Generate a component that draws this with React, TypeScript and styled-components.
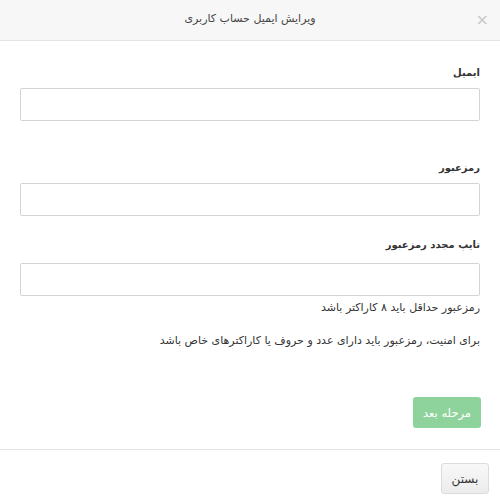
import styled, { createGlobalStyle } from 'styled-components'

const GlobalStyle = createGlobalStyle`
    html, body {
        margin: 0;
        padding: 0;
        background: #ffffff;
    }
    body {
        font-family: 'DejaVu Sans', 'Noto Sans', sans-serif;
        color: #333333;
    }
`

const Dialog = styled.div`
    width: 500px;
    height: 500px;
    direction: rtl;
    display: flex;
    flex-direction: column;
    background: #ffffff;
`

const Header = styled.div`
    position: relative;
    height: 40px;
    flex-shrink: 0;
    background: #f7f7f7;
    border-bottom: 1px solid #e3e3e3;
    display: flex;
    align-items: center;
    justify-content: center;
`

const Title = styled.h4`
    margin: 0 0 3px 0;
    font-size: 11px;
    font-weight: normal;
    color: #444444;
`

const CloseButton = styled.span`
    position: absolute;
    right: 11px;
    top: 10px;
    font-size: 16px;
    line-height: 20px;
    color: #c8c8c8;
    cursor: pointer;
`

const Body = styled.div`
    flex: 1;
    padding: 22px 20px 21px 20px;
    display: flex;
    flex-direction: column;
`

const Group = styled.div<{ $top: number }>`
    display: flex;
    flex-direction: column;
    margin-top: ${(p) => p.$top}px;
`

const Label = styled.label<{ $gap: number }>`
    font-size: 10px;
    font-weight: bold;
    line-height: 20px;
    color: #333333;
    margin-bottom: ${(p) => p.$gap}px;
`

const Input = styled.input`
    box-sizing: border-box;
    width: 100%;
    height: 33px;
    border: 1px solid #d4d4d4;
    border-radius: 2px;
    padding: 4px 10px;
    font-family: inherit;
    font-size: 13px;
    direction: rtl;
    &:focus {
        outline: 0;
    }
`

const Hint = styled.p<{ $top: number }>`
    margin: ${(p) => p.$top}px 0 0 0;
    font-size: 11px;
    line-height: 18px;
    color: #333333;
`

const Actions = styled.div`
    margin-top: auto;
    display: flex;
    justify-content: flex-start;
`

const NextButton = styled.button`
    width: 68px;
    height: 31px;
    margin-right: -1px;
    border: none;
    border-radius: 3px;
    background: #8fd39c;
    color: #ffffff;
    font-family: inherit;
    font-size: 11.5px;
    cursor: pointer;
`

const Footer = styled.div`
    height: 51px;
    flex-shrink: 0;
    box-sizing: border-box;
    border-top: 1px solid #e3e3e3;
    padding: 13px 11px 0 11px;
    display: flex;
    justify-content: flex-start;
`

const CloseAction = styled.button`
    width: 48px;
    height: 31px;
    border: 1px solid #dcdcdc;
    border-radius: 3px;
    background: linear-gradient(#f8f8f8, #ececec);
    color: #333333;
    font-family: inherit;
    font-size: 12px;
    cursor: pointer;
`

const App = () => {
    return (
        <>
            <GlobalStyle />
            <Dialog>
                <Header>
                    <Title>ویرایش ایمیل حساب کاربری</Title>
                    <CloseButton>×</CloseButton>
                </Header>
                <Body>
                    <Group $top={0}>
                        <Label $gap={5}>ایمیل</Label>
                        <Input type='email' />
                    </Group>
                    <Group $top={37}>
                        <Label $gap={5}>رمزعبور</Label>
                        <Input type='password' />
                    </Group>
                    <Group $top={19}>
                        <Label $gap={8}>تایپ مجدد رمزعبور</Label>
                        <Input type='password' />
                    </Group>
                    <Hint $top={3}>رمزعبور حداقل باید ۸ کاراکتر باشد</Hint>
                    <Hint $top={15}>برای امنیت، رمزعبور باید دارای عدد و حروف یا کاراکترهای خاص باشد</Hint>
                    <Actions>
                        <NextButton>مرحله بعد</NextButton>
                    </Actions>
                </Body>
                <Footer>
                    <CloseAction>بستن</CloseAction>
                </Footer>
            </Dialog>
        </>
    )
}

export default App
